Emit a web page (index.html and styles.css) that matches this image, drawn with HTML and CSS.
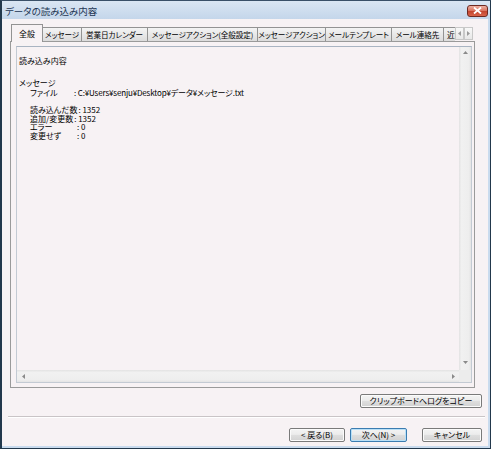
FILE: index.html
```html
<!DOCTYPE html>
<html lang="ja">
<head>
<meta charset="utf-8">
<title>データの読み込み内容</title>
<link rel="stylesheet" href="styles.css">
</head>
<body>
<div class="window">
  <div class="titlebar">
    <span class="title">データの読み込み内容</span>
    <div class="close"><svg width="9" height="7" viewBox="0 0 9 7"><path d="M1 0.5 L8 6.5 M8 0.5 L1 6.5" stroke="#fff" stroke-width="1.8"/></svg></div>
  </div>
  <div class="client">
    <div class="tabbar">
      <div class="tabs">
        <div class="tab sel">全般</div>
        <div class="tab">メッセージ</div>
        <div class="tab">営業日カレンダー</div>
        <div class="tab">メッセージアクション(全般設定)</div>
        <div class="tab">メッセージアクション</div>
        <div class="tab">メールテンプレート</div>
        <div class="tab">メール連絡先</div>
        <div class="tab last">近況</div>
      </div>
      <div class="spin">
        <div class="spinbtn"><svg width="3" height="5" viewBox="0 0 3 5"><path d="M3 0 L0 2.5 L3 5Z" fill="#9a9a9a"/></svg></div>
        <div class="spinbtn"><svg width="3" height="5" viewBox="0 0 3 5"><path d="M0 0 L3 2.5 L0 5Z" fill="#9a9a9a"/></svg></div>
      </div>
    </div>
    <div class="panel">
      <div class="editbox">
        <div class="content">
          <div class="ln">読み込み内容</div>
          <div class="ln l2">メッセージ</div>
          <div class="kv l3"><span class="k path">ファイル</span><span class="v">: C:¥Users¥senju¥Desktop¥データ¥メッセージ.txt</span></div>
          <div class="group">
            <div class="kv"><span class="k">読み込んだ数</span><span class="v">: 1352</span></div>
            <div class="kv"><span class="k mid">追加/変更数</span><span class="v">: 1352</span></div>
            <div class="kv"><span class="k wide">エラー</span><span class="v">: 0</span></div>
            <div class="kv"><span class="k wide">変更せず</span><span class="v">: 0</span></div>
          </div>
        </div>
        <div class="vscroll">
          <div class="arr"><svg width="5" height="3" viewBox="0 0 5 3"><path d="M0 3 L2.5 0 L5 3Z" fill="#8a8a8a"/></svg></div>
          <div class="arr"><svg width="5" height="3" viewBox="0 0 5 3"><path d="M0 0 L2.5 3 L5 0Z" fill="#8a8a8a"/></svg></div>
        </div>
        <div class="hscroll">
          <div class="arr"><svg width="3" height="5" viewBox="0 0 3 5"><path d="M3 0 L0 2.5 L3 5Z" fill="#8a8a8a"/></svg></div>
          <div class="arr"><svg width="3" height="5" viewBox="0 0 3 5"><path d="M0 0 L3 2.5 L0 5Z" fill="#8a8a8a"/></svg></div>
        </div>
        <div class="corner"></div>
      </div>
    </div>
    <div class="row-copy">
      <button class="btn copy">クリップボードへログをコピー</button>
    </div>
    <div class="sep"></div>
    <div class="row-nav">
      <button class="btn back">&lt; 戻る(B)</button>
      <button class="btn next">次へ(N) &gt;</button>
      <button class="btn cancel">キャンセル</button>
    </div>
  </div>
</div>
</body>
</html>
```
FILE: styles.css
```css
* { box-sizing: border-box; margin: 0; padding: 0; }
html, body { width: 491px; height: 449px; overflow: hidden; }
body {
  font-family: "Noto Sans CJK JP", "Noto Sans", sans-serif;
  font-feature-settings: "palt";
  font-size: 8px;
  color: #000;
  background: #fff;
}
.window {
  width: 491px;
  height: 449px;
  display: flex;
  flex-direction: column;
  background: #c9dbee;
  border-left: 2px solid #22384c;
  border-right: 1px solid #22384c;
  border-bottom: 1px solid #22384c;
  border-top: 1px solid #3a5068;
}
.titlebar {
  height: 18px;
  flex: none;
  display: flex;
  align-items: center;
  justify-content: space-between;
  padding: 0 2px 0 3px;
  background: linear-gradient(#dae6f3, #c4d6ea);
}
.title {
  color: #1b3452;
  font-size: 9.5px;
  line-height: 12px;
  margin-top: 1px;
}
.close {
  width: 21px;
  height: 12px;
  margin-top: 1px;
  border: 1px solid #6e2a22;
  border-radius: 3px;
  background: linear-gradient(#eeb0a2, #d9735f 48%, #c2442e 52%, #d9634a);
  display: flex;
  align-items: center;
  justify-content: center;
}
.client {
  height: 427px;
  flex: none;
  margin-right: 2px;
  background: #f7f2f4;
  padding: 5px 0 0 8px;
  display: flex;
  flex-direction: column;
}
.tabbar {
  height: 18px;
  display: flex;
  align-items: flex-end;
  position: relative;
  z-index: 1;
}
.tabs {
  width: 445px;
  height: 18px;
  display: flex;
  align-items: flex-end;
  overflow: hidden;
  padding-left: 2px;
}
.tab {
  flex: none;
  height: 14px;
  margin-bottom: 1px;
  margin-left: -1px;
  border: 1px solid #939393;
  border-bottom: none;
  font-size: 7.6px;
  line-height: 13px;
  text-align: center;
  white-space: nowrap;
  overflow: hidden;
  letter-spacing: -0.1px;
  background: linear-gradient(#f4f4f4, #e8e8e8 50%, #dcdcdc);
}
.tab:nth-child(1) { width: 32px; }
.tab:nth-child(2) { width: 40px; }
.tab:nth-child(3) { width: 67px; }
.tab:nth-child(4) { width: 111px; }
.tab:nth-child(5) { width: 69px; }
.tab:nth-child(6) { width: 67px; }
.tab:nth-child(7) { width: 53px; }
.tab.last { width: 30px; text-align: left; padding-left: 3px; }
.tab.sel {
  height: 18px;
  margin-bottom: 0;
  padding-top: 2px;
  font-size: 8px;
  background: #f7f2f4;
  position: relative;
  z-index: 2;
}
.spin {
  display: flex;
  margin-bottom: 2px;
}
.spinbtn {
  width: 9px;
  height: 13px;
  border: 1px solid #c8c8c8;
  background: linear-gradient(#f8f8f8, #e8e8e8);
  display: flex;
  align-items: center;
  justify-content: center;
}
.panel {
  width: 465px;
  height: 347px;
  margin-top: -1px;
  border: 1px solid #9a9a9a;
  background: #f7f2f4;
  padding: 4px 2px 3px 5px;
}
.editbox {
  width: 456px;
  height: 337px;
  border: 1px solid #c3cad3;
  border-top-color: #a9b4c2;
  display: grid;
  grid-template-columns: 1fr 12px;
  grid-template-rows: 1fr 12px;
  background: #f7f2f4;
}
.content {
  padding: 9px 0 0 2px;
  overflow: hidden;
  line-height: 9px;
  white-space: nowrap;
}
.l2 { margin-top: 13px; }
.l3 { margin-top: 1px; }
.kv { display: flex; padding-left: 11px; }
.k { min-width: 41px; flex: none; }
.k.path { min-width: 43px; }
.k.mid { min-width: 43px; }
.k.wide { min-width: 46px; }
.v { margin-left: 1px; }
.l3 .v { letter-spacing: -0.15px; }
.group { margin-top: 9px; line-height: 8.5px; }
.vscroll {
  grid-column: 2;
  grid-row: 1;
  background: linear-gradient(to right, #e2e2e2, #f1f1f1 20%, #eeeeee 80%, #e4e4e4);
  display: flex;
  flex-direction: column;
  justify-content: space-between;
  align-items: center;
  padding: 4px 0 6px;
}
.hscroll {
  grid-column: 1;
  grid-row: 2;
  background: linear-gradient(#e2e2e2, #f1f1f1 20%, #eeeeee 80%, #e4e4e4);
  display: flex;
  justify-content: space-between;
  align-items: center;
  padding: 0 4px 0 5px;
}
.arr { display: flex; line-height: 0; }
.corner { grid-column: 2; grid-row: 2; background: #ececec; }
.row-copy {
  display: flex;
  justify-content: flex-end;
  margin-top: 6px;
  padding-right: 6px;
}
.btn {
  height: 14px;
  border: 1px solid #7a7a7a;
  border-radius: 2px;
  background: linear-gradient(#f4f4f4, #ececec 45%, #dedede 52%, #d2d2d2);
  font: inherit;
  font-size: 8px;
  line-height: 12px;
  text-align: center;
  color: #000;
  box-shadow: inset 0 0 0 1px #fbfbfb;
}
.copy { width: 122px; }
.sep {
  height: 2px;
  margin: 8px 3px 0 -2px;
  border-top: 1px solid #c9c4c6;
  border-bottom: 1px solid #ffffff;
}
.row-nav {
  display: flex;
  justify-content: flex-end;
  margin-top: 10px;
  padding-right: 6px;
}
.back { width: 56px; }
.next { width: 57px; margin-left: 5px; border-color: #3b7cb0; box-shadow: inset 0 0 0 1px #b9e0f7; }
.cancel { width: 60px; margin-left: 15px; }
```
